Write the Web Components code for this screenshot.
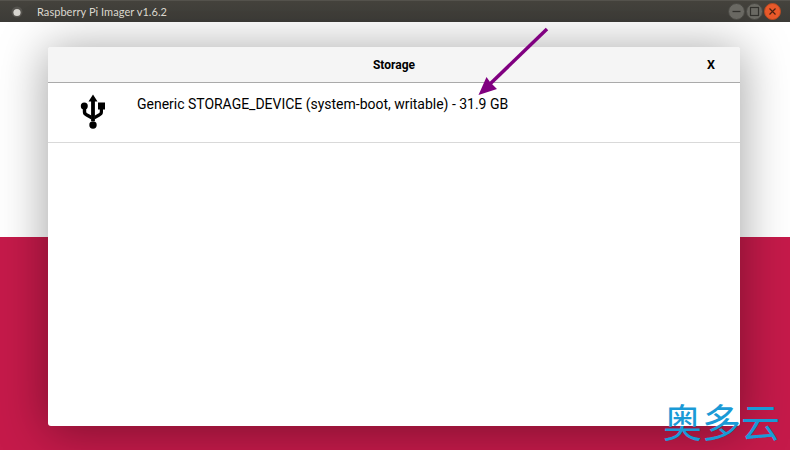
<!DOCTYPE html>
<html><head><meta charset="utf-8"><style>
html,body{margin:0;padding:0;width:790px;height:450px;overflow:hidden}
</style></head><body>
<template id="t-title"><style>
:host{display:flex;align-items:center;height:22px;box-sizing:border-box;background:linear-gradient(#45433d,#3c3b37);color:#dfdbd2;font:11px "Lato","Noto Sans",sans-serif;padding-left:11px;flex:none;border-top:1px solid #55534d}
.app{width:12px;height:12px;margin-right:14px;display:block}
.title{flex:1;letter-spacing:.05px;white-space:nowrap}
.btns{display:flex;gap:1px;margin-right:9px}
.btn{width:15px;height:15px;border-radius:50%;background:#6b6a64;border:1px solid #4a4944;display:flex;align-items:center;justify-content:center;box-sizing:content-box}
.btn.close{background:#e9592a;border-color:#b84a22}
svg{display:block}
</style>
<svg class="app" viewBox="0 0 12 12"><circle cx="6" cy="6" r="5.5" fill="#55534e"/><circle cx="6" cy="6.500" r="3.6" fill="#d8d6d0"/></svg>
<span class="title"><slot></slot></span>
<div class="btns">
<div class="btn"><svg width="11" height="11" viewBox="0 0 11 11"><path d="M1.500 5.500h8" stroke="#33322e" stroke-width="1.3"/></svg></div>
<div class="btn"><svg width="11" height="11" viewBox="0 0 11 11"><rect x="1.500" y="1.500" width="8" height="8" fill="none" stroke="#33322e" stroke-width="1.2"/></svg></div>
<div class="btn close"><svg width="11" height="11" viewBox="0 0 11 11"><path d="M2.500 2.500l6 6M8.500 2.500l-6 6" stroke="#4a2010" stroke-width="1.2"/></svg></div>
</div></template>

<template id="t-app"><style>
:host{display:flex;flex-direction:column;width:790px;height:450px;position:relative;overflow:hidden;font-family:"Roboto","Liberation Sans",sans-serif}
.top{height:215px;background:#fff;flex:none}
.bottom{flex:1;background:#c51a4a}
</style>
<slot name="title"></slot>
<div class="top"></div><div class="bottom"></div>
<slot></slot></template>

<template id="t-dialog"><style>
:host{display:flex;flex-direction:column;position:absolute;left:48px;top:47px;width:692px;height:379px;background:#fff;border-radius:3px;box-shadow:0 4px 48px 2px rgba(0,0,0,.36)}
header{height:36px;box-sizing:border-box;flex:none;background:#f5f5f5;border-bottom:1px solid #aaa;display:grid;grid-template-columns:1fr auto 1fr;align-items:center;border-radius:3px 3px 0 0;font:700 12px "Roboto","Liberation Sans",sans-serif;color:#000}
.x{justify-self:end;width:33px;font-size:12.5px}
</style>
<header><span></span><span><slot name="heading"></slot></span><span class="x">X</span></header>
<slot></slot></template>

<template id="t-row"><style>
:host{display:flex;align-items:flex-start;height:60px;box-sizing:border-box;border-bottom:1px solid #d9d9d9;font:14px "Roboto","Liberation Sans",sans-serif;letter-spacing:-.015px;color:#000}
.icon{width:89px;flex:none;padding-left:32px;padding-top:11px;box-sizing:border-box}
.label{padding-top:12px;line-height:18px;white-space:nowrap}
svg{display:block}
</style>
<div class="icon"><svg width="26" height="36" viewBox="0 0 26 36"><g fill="#000">
<path d="M13 0.500l4.500 7h-2.600V27h-3.800V7.500H8.500z"/>
<circle cx="13" cy="31" r="3.700"/>
<circle cx="4.300" cy="12" r="3.500"/>
<rect x="18" y="8.500" width="7" height="7"/>
<path d="M2.800 14v4c0 2.200 1.200 3.400 3.200 4.400l5.400 3v-3.800l-3.700-2.100c-1-.6-1.500-1.100-1.500-2.100V14zM19.800 14v3.400c0 1-.5 1.500-1.500 2.100l-3.800 2.200v3.800l5.300-3.100c2-1 3.200-2.200 3.200-4.400V14z"/>
</g></svg></div>
<div class="label"><slot></slot></div></template>

<template id="t-arrow"><style>
:host{display:block;position:absolute;left:470px;top:22px;width:85px;height:80px}
svg{display:block}
</style>
<svg width="85" height="80" viewBox="0 0 85 80"><path d="M77 7L20 62" stroke="#800080" stroke-width="3.500" fill="none"/><path d="M8.500 73L16.500 55L20 60L27 67z" fill="#800080"/></svg></template>

<template id="t-mark"><style>
:host{display:block;position:absolute;left:663px;top:398px;color:#1a9ad6;font:39px/44px "Noto Sans CJK SC",sans-serif;white-space:nowrap}
</style><slot></slot></template>

<imager-app>
<title-bar slot="title">Raspberry Pi Imager v1.6.2</title-bar>
<storage-dialog>
<span slot="heading">Storage</span>
<storage-row>Generic STORAGE_DEVICE (system-boot, writable) - 31.9 GB</storage-row>
</storage-dialog>
<arrow-mark></arrow-mark>
<water-mark>奥多云</water-mark>
</imager-app>
<script>
for (const [tag, id] of [['imager-app','t-app'],['title-bar','t-title'],['storage-dialog','t-dialog'],['storage-row','t-row'],['arrow-mark','t-arrow'],['water-mark','t-mark']]) {
  customElements.define(tag, class extends HTMLElement {
    constructor(){super();this.attachShadow({mode:'open'}).appendChild(document.getElementById(id).content.cloneNode(true));}
  });
}
</script>
</body></html>
